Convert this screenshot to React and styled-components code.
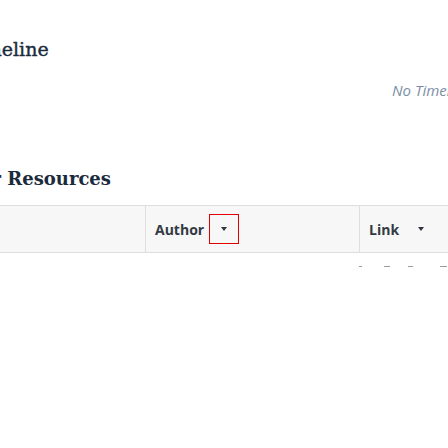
import React from 'react';
import styled, { createGlobalStyle } from 'styled-components';

const GlobalStyle = createGlobalStyle`
  html, body {
    margin: 0;
    padding: 0;
    background: #fff;
    overflow: hidden;
  }
  body {
    width: 448px;
    height: 448px;
  }
`;

const Page = styled.div`
  width: 448px;
  height: 448px;
  overflow: hidden;
`;

const SectionTitle = styled.h2`
  margin: 0;
  margin-left: ${props => props.offset}px;
  margin-top: ${props => props.top}px;
  font-family: 'DejaVu Serif', 'Liberation Serif', serif;
  font-size: ${props => props.size}px;
  line-height: 24px;
  font-weight: ${props => props.weight};
  -webkit-text-stroke: ${props => props.stroke || 0}px #1c2b3c;
  color: #1c2b3c;
  white-space: nowrap;
`;

const EmptyNote = styled.div`
  margin-top: 19px;
  padding-left: 392px;
  font-family: 'Open Sans', 'Liberation Sans', sans-serif;
  font-size: 15px;
  line-height: 20px;
  font-style: italic;
  color: #7b8ea6;
  white-space: nowrap;
`;

const HeaderRow = styled.div`
  display: flex;
  margin-top: 14px;
  height: 46px;
  background: #f7f7f7;
  border-top: 1px solid #dedede;
  border-bottom: 1px solid #dedede;
  width: 520px;
`;

const HeaderCell = styled.div`
  display: flex;
  align-items: center;
  box-sizing: border-box;
  width: ${props => props.width}px;
  padding-left: 9px;
  border-left: ${props => (props.first ? 'none' : '1px solid #dedede')};
  font-family: 'Open Sans', 'Liberation Sans', sans-serif;
  font-size: 14px;
  font-weight: 700;
  color: #333a44;
`;

const SortToggle = styled.span`
  display: inline-flex;
  align-items: center;
  justify-content: center;
  box-sizing: border-box;
  width: 30px;
  height: 30px;
  margin-left: ${props => props.gap}px;
  border: 1px solid ${props => (props.focused ? '#e00000' : 'transparent')};
`;

const Caret = styled.span`
  width: 0;
  height: 0;
  border-left: 3.5px solid transparent;
  border-right: 3.5px solid transparent;
  border-top: 4px solid #2f3540;
`;

const DashRow = styled.div`
  display: flex;
  margin-top: 13px;
  height: 1px;
`;

const Dash = styled.span`
  margin-left: ${props => props.at}px;
  width: ${props => props.len}px;
  height: 1px;
  background: #a09a96;
`;

function ColumnHeader({ label, width, first, gap, focused }) {
  return (
    <HeaderCell width={width} first={first}>
      {label}
      {label && (
        <SortToggle gap={gap} focused={focused}>
          <Caret />
        </SortToggle>
      )}
    </HeaderCell>
  );
}

export default function App() {
  return (
    <Page>
      <GlobalStyle />
      <SectionTitle top={37} size={19} weight={400} stroke={0.4} offset={-35}>
        Timeline
      </SectionTitle>
      <EmptyNote>No Timeline</EmptyNote>
      <SectionTitle top={67} size={18} weight={600} offset={-57}>
        Other Resources
      </SectionTitle>
      <HeaderRow>
        <ColumnHeader width={145} first />
        <ColumnHeader label="Author" width={214} gap={5} focused />
        <ColumnHeader label="Link" width={161} gap={7} />
      </HeaderRow>
      <DashRow>
        <Dash at={359} len={3} />
        <Dash at={22} len={6} />
        <Dash at={18} len={5} />
        <Dash at={27} len={7} />
      </DashRow>
    </Page>
  );
}
